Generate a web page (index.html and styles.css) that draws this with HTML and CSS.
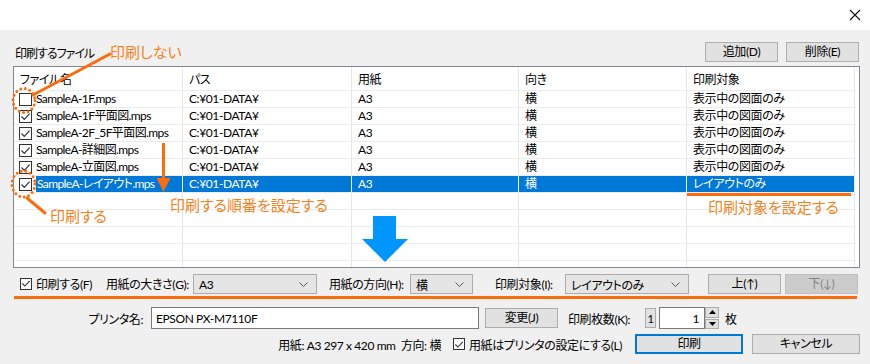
FILE: index.html
```html
<!DOCTYPE html>
<html lang="ja">
<head>
<meta charset="utf-8">
<link rel="stylesheet" href="styles.css">
</head>
<body>
<div class="window">
  <div class="titlebar">
    <svg class="close" width="12" height="12" viewBox="0 0 12 12"><path d="M1 1 L11 11 M11 1 L1 11" stroke="#111" stroke-width="1.1" fill="none"/></svg>
  </div>
  <div class="body">
    <div class="toprow">
      <span class="label">印刷するファイル</span>
      <div class="btns">
        <button class="btn w73">追加(D)</button>
        <button class="btn w73">削除(E)</button>
      </div>
    </div>

    <div class="list">
      <div class="row head">
        <div class="c c1">ファイル名</div><div class="c">パス</div><div class="c">用紙</div><div class="c">向き</div><div class="c">印刷対象</div>
      </div>
      <div class="row">
        <div class="c c1"><span class="cb"></span><span class="nm">SampleA-1F.mps</span></div><div class="c">C:¥01-DATA¥</div><div class="c">A3</div><div class="c">横</div><div class="c">表示中の図面のみ</div>
      </div>
      <div class="row">
        <div class="c c1"><span class="cb on"><svg viewBox="0 0 11 11"><path d="M1.5 5.5 L4.3 8.3 L9.6 2.6" /></svg></span><span class="nm">SampleA-1F平面図.mps</span></div><div class="c">C:¥01-DATA¥</div><div class="c">A3</div><div class="c">横</div><div class="c">表示中の図面のみ</div>
      </div>
      <div class="row">
        <div class="c c1"><span class="cb on"><svg viewBox="0 0 11 11"><path d="M1.5 5.5 L4.3 8.3 L9.6 2.6" /></svg></span><span class="nm">SampleA-2F_5F平面図.mps</span></div><div class="c">C:¥01-DATA¥</div><div class="c">A3</div><div class="c">横</div><div class="c">表示中の図面のみ</div>
      </div>
      <div class="row">
        <div class="c c1"><span class="cb on"><svg viewBox="0 0 11 11"><path d="M1.5 5.5 L4.3 8.3 L9.6 2.6" /></svg></span><span class="nm">SampleA-詳細図.mps</span></div><div class="c">C:¥01-DATA¥</div><div class="c">A3</div><div class="c">横</div><div class="c">表示中の図面のみ</div>
      </div>
      <div class="row">
        <div class="c c1"><span class="cb on"><svg viewBox="0 0 11 11"><path d="M1.5 5.5 L4.3 8.3 L9.6 2.6" /></svg></span><span class="nm">SampleA-立面図.mps</span></div><div class="c">C:¥01-DATA¥</div><div class="c">A3</div><div class="c">横</div><div class="c">表示中の図面のみ</div>
      </div>
      <div class="row sel">
        <div class="c c1"><span class="cb on"><svg viewBox="0 0 11 11"><path d="M1.5 5.5 L4.3 8.3 L9.6 2.6" /></svg></span><span class="nm">SampleA-レイアウト.mps</span></div><div class="c">C:¥01-DATA¥</div><div class="c">A3</div><div class="c">横</div><div class="c">レイアウトのみ</div>
      </div>
      <div class="row"><div class="c c1"></div><div class="c"></div><div class="c"></div><div class="c"></div><div class="c"></div></div>
      <div class="row"><div class="c c1"></div><div class="c"></div><div class="c"></div><div class="c"></div><div class="c"></div></div>
      <div class="row"><div class="c c1"></div><div class="c"></div><div class="c"></div><div class="c"></div><div class="c"></div></div>
      <div class="row"><div class="c c1"></div><div class="c"></div><div class="c"></div><div class="c"></div><div class="c"></div></div>
      <div class="row"><div class="c c1"></div><div class="c"></div><div class="c"></div><div class="c"></div><div class="c"></div></div>
    </div>

    <div class="controls">
      <div class="chk w86"><span class="cb on"><svg viewBox="0 0 11 11"><path d="M1.5 5.5 L4.3 8.3 L9.6 2.6" /></svg></span><span>印刷する(F)</span></div>
      <span class="lbl w87">用紙の大きさ(G):</span>
      <div class="combo w124"><span>A3</span><svg class="chev" viewBox="0 0 9 5"><path d="M0.5 0.5 L4.5 4.5 L8.5 0.5"/></svg></div>
      <span class="lbl w81 ml12">用紙の方向(H):</span>
      <div class="combo w63"><span>横</span><svg class="chev" viewBox="0 0 9 5"><path d="M0.5 0.5 L4.5 4.5 L8.5 0.5"/></svg></div>
      <span class="lbl w70 ml22">印刷対象(I):</span>
      <div class="combo w124"><span>レイアウトのみ</span><svg class="chev" viewBox="0 0 9 5"><path d="M0.5 0.5 L4.5 4.5 L8.5 0.5"/></svg></div>
      <button class="btn w73 ml19">上(↑)</button>
      <button class="btn w73 ml4 dis">下(↓)</button>
    </div>

    <div class="orange-line"></div>

    <div class="printer">
      <span class="plbl">プリンタ名:</span>
      <div class="field">EPSON PX-M7110F</div>
      <button class="btn w73 ml6">変更(J)</button>
      <span class="lbl w77 ml10">印刷枚数(K):</span>
      <div class="mini">1</div>
      <div class="num">1</div>
      <div class="spin">
        <span class="up"><svg viewBox="0 0 7 4"><path d="M0 4 L3.5 0 L7 4 Z"/></svg></span>
        <span class="dn"><svg viewBox="0 0 7 4"><path d="M0 0 L3.5 4 L7 0 Z"/></svg></span>
      </div>
      <span class="mai">枚</span>
    </div>

    <div class="last">
      <span class="info">用紙: A3 297 x 420 mm&nbsp;&nbsp;方向: 横</span>
      <div class="chk w182"><span class="cb on"><svg viewBox="0 0 11 11"><path d="M1.5 5.5 L4.3 8.3 L9.6 2.6" /></svg></span><span>用紙はプリンタの設定にする(L)</span></div>
      <button class="btn w108 primary">印刷</button>
      <button class="btn w108 ml9">キャンセル</button>
    </div>
  </div>

  <svg class="overlay" width="870" height="364" viewBox="0 0 870 364">
    <g stroke="#fa6c0c" fill="none" stroke-linecap="round">
      <line x1="110" y1="54" x2="33" y2="95" stroke-width="3"/>
      <ellipse cx="24" cy="100.5" rx="11" ry="12" stroke-width="3" stroke-dasharray="0 4.6"/>
      <ellipse cx="23.5" cy="184" rx="11.5" ry="13" stroke-width="3" stroke-dasharray="0 4.6"/>
      <line x1="27" y1="198" x2="45" y2="213" stroke-width="3"/>
      <line x1="163.5" y1="143" x2="163.5" y2="180" stroke-width="3" stroke-linecap="butt"/>
    </g>
    <polygon points="156.5,178 170.5,178 163.5,192" fill="#fa6c0c"/>
    <rect x="687" y="193" width="164" height="3" fill="#fa6c0c"/>
    <polygon points="373,216 396,216 396,239 408,239 385,262 362,239 373,239" fill="#0096ff"/>
  </svg>
  <span class="note n1">印刷しない</span>
  <span class="note n2">印刷する</span>
  <span class="note n3">印刷する順番を設定する</span>
  <span class="note n4">印刷対象を設定する</span>
</div>
</body>
</html>
```

FILE: styles.css
```css
* { box-sizing: border-box; }
html, body { margin: 0; padding: 0; }
body {
  width: 870px;
  height: 364px;
  overflow: hidden;
  background: #f0f0f0;
  font-family: "Lato", "Noto Sans CJK JP", sans-serif;
  font-size: 12px;
  font-feature-settings: "palt";
  letter-spacing: -0.4px;
  color: #000;
}
.window { position: relative; width: 870px; height: 364px; }

.titlebar {
  height: 30px;
  background: #fff;
  display: flex;
  justify-content: flex-end;
  align-items: center;
  padding-right: 9px;
}
.close { display: block; width: 12px; height: 12px; margin-top: -1px; }

.body { padding: 12px 10px 0 13px; }

.toprow {
  height: 20px;
  display: flex;
  align-items: center;
  justify-content: space-between;
}
.toprow .label { padding-left: 2px; padding-top: 1px; letter-spacing: -1px; }
.btns { display: flex; gap: 8px; margin-right: 1px; }

.btn {
  height: 20px;
  border: 1px solid #adadad;
  background: #e1e1e1;
  font: inherit;
  letter-spacing: inherit;
  color: #000;
  padding: 0;
  display: flex;
  align-items: center;
  justify-content: center;
  line-height: 1;
}
.btn.dis { background: #cccccc; border-color: #bfbfbf; color: #838383; }
.btn.primary { border: 2px solid #0078d7; }
.w73 { width: 73px; }
.w108 { width: 108px; }
.ml4 { margin-left: 4px; }
.ml6 { margin-left: 6px; }
.ml9 { margin-left: 9px; }
.ml10 { margin-left: 10px; }
.ml12 { margin-left: 12px; }
.ml19 { margin-left: 19px; }
.ml22 { margin-left: 22px; }

/* list */
.list {
  margin-top: 4px;
  width: 847px;
  height: 202px;
  border: 1px solid #828790;
  background: #fff;
  overflow: hidden;
}
.row {
  display: grid;
  grid-template-columns: 169px 169px 167px 168px 168px;
  height: 17px;
  border-bottom: 1px solid #ececec;
  width: 841px;
}
.row.head { height: 24px; }
.c {
  border-right: 1px solid #e6e6e6;
  padding-left: 6px;
  display: flex;
  align-items: center;
  white-space: nowrap;
  overflow: hidden;
  line-height: 1;
}
.row.head .c { padding-top: 2px; }
.row.head .c1 { padding-left: 6px; }
.c1 { padding-left: 5px; }
.nm { padding-left: 4px; height: 100%; display: flex; align-items: center; flex: 1; letter-spacing: -0.6px; }

.cb {
  width: 13px;
  height: 13px;
  border: 1px solid #333;
  background: #fff;
  flex: none;
  display: flex;
  align-items: center;
  justify-content: center;
}
.cb svg { width: 11px; height: 11px; }
.cb svg path { fill: none; stroke: #333; stroke-width: 1.2; }

.row.sel .c:not(.c1) { background: #0078d7; color: #fff; border-right-color: #f0f0f0; }
.row.sel .c1 { border-right-color: #f0f0f0; }
.row.sel .nm { background: #0078d7; color: #fff; margin-left: 4px; padding-left: 1px; }

/* controls row */
.controls {
  margin-top: 5px;
  height: 21px;
  display: flex;
  align-items: center;
  padding-left: 7px;
  white-space: nowrap;
}
.chk { display: flex; align-items: center; gap: 4px; }
.chk .cb { width: 12px; height: 12px; }
.w86 { width: 86px; }
.w182 { width: 182px; margin-left: 12px; }
.lbl { white-space: nowrap; }
.w87 { width: 87px; }
.w81 { width: 81px; }
.w70 { width: 70px; }
.w77 { width: 77px; }
.combo {
  height: 20px;
  border: 1px solid #acacac;
  background: #e5e5e5;
  display: flex;
  align-items: center;
  justify-content: space-between;
  padding: 1px 8px 0 5px;
}
.w124 { width: 124px; }
.w63 { width: 63px; }
.chev { width: 9px; height: 5px; }
.chev path { fill: none; stroke: #555; stroke-width: 1; }

.orange-line {
  margin-top: 2px;
  margin-left: 1px;
  width: 843px;
  height: 3px;
  background: #fa6c0c;
}

/* printer row */
.printer {
  margin-top: 8px;
  height: 22px;
  display: flex;
  align-items: center;
}
.plbl { width: 130px; text-align: right; margin-right: 8px; }
.field {
  width: 328px;
  height: 22px;
  border: 1px solid #7a7a7a;
  background: #fff;
  display: flex;
  align-items: center;
  padding-left: 4px;
}
.mini {
  width: 11px;
  height: 20px;
  border: 1px solid #adadad;
  background: #e1e1e1;
  display: flex;
  align-items: center;
  justify-content: center;
  font-size: 11px;
}
.num {
  margin-left: 3px;
  width: 46px;
  height: 22px;
  border: 1px solid #7a7a7a;
  background: #fff;
  display: flex;
  align-items: center;
  justify-content: flex-end;
  padding-right: 5px;
}
.spin {
  width: 14px;
  height: 22px;
  display: flex;
  flex-direction: column;
  gap: 1px;
}
.spin span {
  flex: 1;
  border: 1px solid #adadad;
  background: #e1e1e1;
  display: flex;
  align-items: center;
  justify-content: center;
}
.spin svg { width: 7px; height: 4px; }
.spin path { fill: #000; }
.mai { margin-left: 6px; }

/* last row */
.last {
  margin-top: 5px;
  height: 20px;
  display: flex;
  align-items: center;
}
.info { width: 428px; text-align: right; }

/* annotations */
.overlay { position: absolute; left: 0; top: 0; pointer-events: none; }
.note {
  position: absolute;
  color: #f58220;
  font-family: "Noto Sans CJK JP", sans-serif;
  font-size: 15px;
  line-height: 16px;
  letter-spacing: 0;
  font-feature-settings: "palt";
  white-space: nowrap;
}
.n1 { left: 110px; top: 44px; }
.n2 { left: 50px; top: 208px; }
.n3 { left: 170px; top: 197px; }
.n4 { left: 708px; top: 199px; }
```
